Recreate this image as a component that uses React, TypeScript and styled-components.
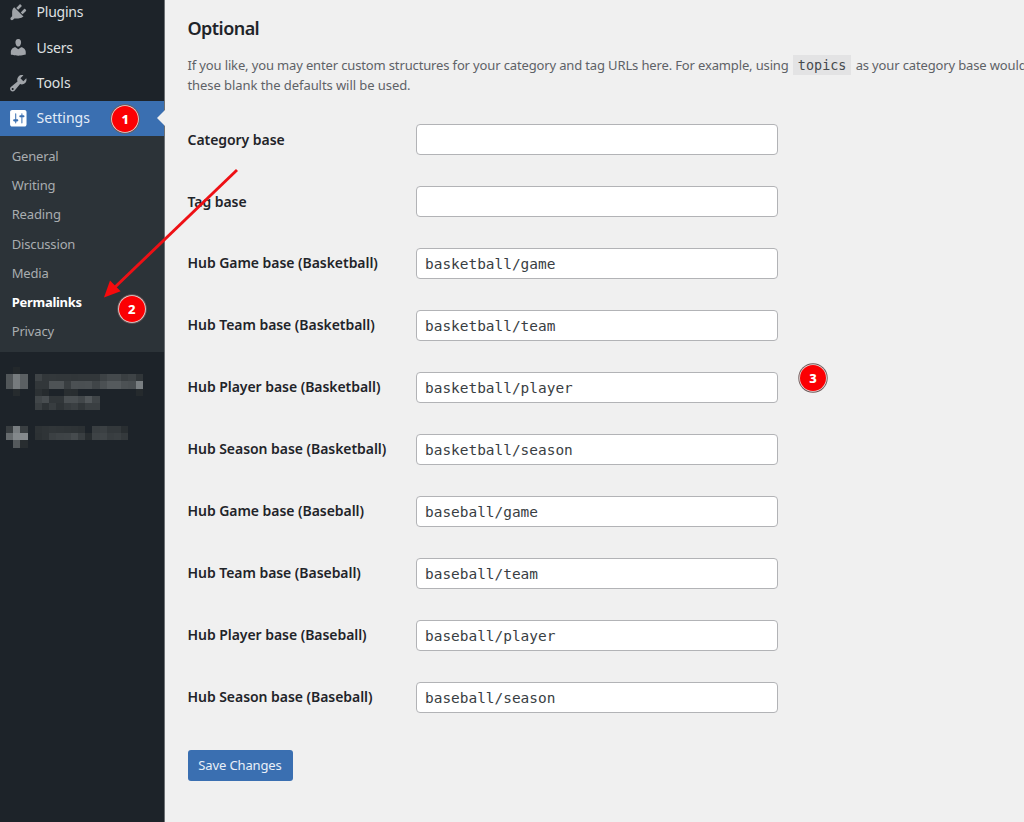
import React from "react";
import styled, { createGlobalStyle } from "styled-components";

const GlobalStyle = createGlobalStyle`
  *, *::before, *::after { box-sizing: border-box; }
  body {
    margin: 0;
    background: #f0f0f0;
    font-family: "Noto Sans", "Open Sans", sans-serif;
    overflow: hidden;
  }
`;

const Screen = styled.div`
  position: relative;
  display: flex;
  width: 1024px;
  height: 822px;
  overflow: hidden;
  background: #f0f0f0;
`;

const Sidebar = styled.nav`
  flex: 0 0 165px;
  display: flex;
  flex-direction: column;
  background: #1d2329;
  border-right: 1px solid #6c7074;
`;

const MenuList = styled.div`
  margin-top: -5.3px;
`;

const MenuItem = styled.a<{ $active?: boolean; $tight?: boolean }>`
  position: relative;
  display: flex;
  align-items: center;
  gap: 8px;
  height: 35.3px;
  padding-left: 8px;
  font-size: 14px;
  line-height: 20px;
  letter-spacing: ${(p) => (p.$tight ? "-0.25px" : "0")};
  color: ${(p) => (p.$active ? "#e3ecf7" : "#dfe0e2")};
  background: ${(p) => (p.$active ? "#3a6fb1" : "transparent")};
`;

const MenuIcon = styled.svg<{ $active?: boolean }>`
  flex: none;
  width: 20.6px;
  height: 20.6px;
  fill: ${(p) => (p.$active ? "#ffffff" : "#a0a4a9")};
`;

const Pointer = styled.span`
  position: absolute;
  right: -1px;
  top: 9.5px;
  border: 8.5px solid transparent;
  border-left-width: 0;
  border-right-color: #f0f0f0;
`;

const SubMenu = styled.div`
  padding: 6.4px 0 6px 11.7px;
  background: #2c3338;
`;

const SubItem = styled.a<{ $current?: boolean }>`
  display: block;
  height: 29.1px;
  font-size: 13px;
  line-height: 29px;
  font-weight: ${(p) => (p.$current ? 700 : 400)};
  letter-spacing: ${(p) => (p.$current ? "-0.28px" : "-0.15px")};
  color: ${(p) => (p.$current ? "#ffffff" : "#a9adb0")};
`;

const Mosaic = styled.svg`
  display: block;
  margin: 15px 0 0 6px;
`;

const Main = styled.main`
  flex: 1 0 859px;
  min-width: 0;
  padding: 15px 0 0 22.5px;
  color: #1f2429;
`;

const Title = styled.h2`
  margin: 0;
  font-size: 18px;
  line-height: 26px;
  font-weight: 600;
  letter-spacing: -0.55px;
`;

const Intro = styled.p`
  margin: 14px 0 14px;
  font-size: 13px;
  line-height: 20px;
  letter-spacing: -0.142px;
  white-space: nowrap;
  color: #5e6267;
`;

const IntroEnd = styled.span`
  letter-spacing: -0.07px;
`;

const Code = styled.code`
  margin: 0 1px;
  padding: 3px 5px 2px;
  background: #e3e3e4;
  color: #45494d;
  font: 13.45px "DejaVu Sans Mono", monospace;
  letter-spacing: 0;
`;

const Field = styled.label`
  display: flex;
  align-items: center;
  height: 62px;
`;

const FieldName = styled.span<{ $raised?: boolean }>`
  flex: 0 0 228.5px;
  padding-bottom: ${(p) => (p.$raised ? "2px" : "0")};
  font-size: 14px;
  line-height: 20px;
  font-weight: 600;
  letter-spacing: -0.05px;
`;

const Input = styled.input`
  width: 362px;
  height: 31px;
  margin: 0 0 1px;
  padding: 1px 8px 0;
  border: 1px solid #b2b3b6;
  border-radius: 4px;
  background: #ffffff;
  color: #393e43;
  font: 14.45px "DejaVu Sans Mono", monospace;
  outline: none;
`;

const SaveButton = styled.button`
  width: 105px;
  height: 31px;
  margin-top: 21px;
  padding: 0 0 1px;
  border: 0;
  border-radius: 3px;
  background: #3a6fb1;
  color: #e9f0f8;
  font: 13px "Noto Sans", sans-serif;
  letter-spacing: -0.13px;
`;

const Badge = styled.span<{ $x: number; $y: number }>`
  position: absolute;
  left: ${(p) => p.$x}px;
  top: ${(p) => p.$y}px;
  display: flex;
  align-items: center;
  justify-content: center;
  width: 26px;
  height: 26px;
  border-radius: 50%;
  background: #fb0003;
  box-shadow: 0 0 0 0.8px #efdada, 0 0 0 1.7px #6e5a5a;
  color: #ffffff;
  font-size: 13px;
  line-height: 26px;
  font-weight: 800;
`;

const ArrowLayer = styled.svg`
  position: absolute;
  left: 95px;
  top: 160px;
  pointer-events: none;
`;

const icons = {
  plugins:
    "M13.11 4.36L9.87 7.6 8 5.73l3.24-3.24c.35-.34 1.05-.2 1.56.32.52.51.66 1.21.31 1.55zm-8 1.77l.91-1.12 9.01 9.01-1.19.84c-.71.71-2.63 1.16-3.82 1.16H6.14L4.9 17.26c-.59.59-1.54.59-2.12 0-.59-.58-.59-1.53 0-2.12l1.24-1.24v-3.88c0-1.13.4-3.19 1.09-3.89zm7.26 3.97l3.24-3.24c.34-.35 1.04-.21 1.55.31.52.51.66 1.21.31 1.55l-3.24 3.25z",
  users:
    "M10 9.25c-2.27 0-2.73-3.44-2.73-3.44C7 4.02 7.82 2 9.97 2c2.16 0 2.98 2.02 2.71 3.81 0 0-.41 3.44-2.68 3.44zm0 2.57L12.72 10c2.39 0 4.52 2.33 4.52 4.53v2.49s-3.65 1.13-7.24 1.13c-3.65 0-7.24-1.13-7.24-1.13v-2.49c0-2.25 1.94-4.48 4.47-4.48z",
  tools:
    "M16.68 9.77c-1.34 1.34-3.3 1.67-4.95.99l-5.41 6.52c-.99.99-2.59.99-3.58 0s-.99-2.59 0-3.57l6.52-5.42c-.68-1.65-.35-3.61.99-4.95 1.28-1.28 3.12-1.62 4.72-1.06l-2.89 2.89 2.82 2.82 2.86-2.87c.53 1.58.18 3.39-1.08 4.65zM3.81 16.21c.4.39 1.04.39 1.43 0 .4-.4.4-1.04 0-1.43-.39-.4-1.03-.4-1.43 0-.39.39-.39 1.03 0 1.43z",
  settings:
    "M18 16V4c0-1.1-.9-2-2-2H4c-1.1 0-2 .9-2 2v12c0 1.1.9 2 2 2h12c1.1 0 2-.9 2-2zM8 11h1c.55 0 1 .45 1 1s-.45 1-1 1H8v1.5c0 .28-.22.5-.5.5s-.5-.22-.5-.5V13H6c-.55 0-1-.45-1-1s.45-1 1-1h1V5.5c0-.28.22-.5.5-.5s.5.22.5.5V11zm5-2h-1c-.55 0-1-.45-1-1s.45-1 1-1h1V5.5c0-.28.22-.5.5-.5s.5.22.5.5V7h1c.55 0 1 .45 1 1s-.45 1-1 1h-1v5.5c0 .28-.22.5-.5.5s-.5-.22-.5-.5V9z",
};

const menu = [
  { name: "Plugins", icon: icons.plugins, tight: true },
  { name: "Users", icon: icons.users, tight: true },
  { name: "Tools", icon: icons.tools },
  { name: "Settings", icon: icons.settings, active: true },
];

const subMenu = ["General", "Writing", "Reading", "Discussion", "Media", "Permalinks", "Privacy"];

const fields: [string, string][] = [
  ["Category base", ""],
  ["Tag base", ""],
  ["Hub Game base (Basketball)", "basketball/game"],
  ["Hub Team base (Basketball)", "basketball/team"],
  ["Hub Player base (Basketball)", "basketball/player"],
  ["Hub Season base (Basketball)", "basketball/season"],
  ["Hub Game base (Baseball)", "baseball/game"],
  ["Hub Team base (Baseball)", "baseball/team"],
  ["Hub Player base (Baseball)", "baseball/player"],
  ["Hub Season base (Baseball)", "baseball/season"],
];

// Pixelated menu entries: one hex brightness per cell, ".." is an empty cell.
const cell = 7.2;
const mosaicRows: [number, string][] = [
  [0, ".. 25"],
  [1, "53 78 5d .. 40 34 35 34 34 33 34 34 34 3f 46 46 3c 40 33"],
  [2, "53 78 5d .. 34 34 50 50 3b 4d 4c 4d 42 4d 57 57 4e 4c 7b"],
  [3, ".. 28 .. .. 2e 28 .. .. 2b 2a .. .. .. .. .. .. .. .. 27"],
  [4, ".. .. .. .. 43 4a 33 33 4c 4c 44 54 42"],
  [5, ".. .. .. .. 3c 30 3a 30 38 3c 33 3c 3c"],
  [8.2, "3a 7a 3c .. 2f 31 33 32 31 30 2e .. 3b 3d 35 35 2b"],
  [9.2, "68 85 87 .. 2e 31 3d 40 41 48 3b 2a 40 42 3a 3c 36"],
  [10.2, ".. 56 2a"],
];

const HiddenEntries = () => (
  <Mosaic width="137" height="82" shapeRendering="crispEdges">
    {mosaicRows.map(([row, cells]) =>
      cells.split(" ").map((v, col) => {
        if (v === "..") return null;
        const n = parseInt(v, 16);
        return (
          <rect
            key={`${row}-${col}`}
            x={col * cell}
            y={row * cell}
            width={cell}
            height={cell}
            fill={`rgb(${n - 2}, ${n + 3}, ${n + 6})`}
          />
        );
      })
    )}
  </Mosaic>
);

export default function App() {
  return (
    <Screen>
      <GlobalStyle />
      <Sidebar>
        <MenuList>
          {menu.map((m) => (
            <MenuItem key={m.name} $active={m.active} $tight={m.tight}>
              <MenuIcon viewBox="0 0 20 20" $active={m.active}>
                <path d={m.icon} />
              </MenuIcon>
              {m.name}
              {m.active && <Pointer />}
            </MenuItem>
          ))}
        </MenuList>
        <SubMenu>
          {subMenu.map((s) => (
            <SubItem key={s} $current={s === "Permalinks"}>
              {s}
            </SubItem>
          ))}
        </SubMenu>
        <HiddenEntries />
      </Sidebar>
      <Main>
        <Title>Optional</Title>
        <Intro>
          If you like, you may enter custom structures for your category and tag URLs here. For example, using{" "}
          <Code>topics</Code> as your category base would
          <br />
          <IntroEnd>these blank the defaults will be used.</IntroEnd>
        </Intro>
        {fields.map(([name, value]) => (
          <Field key={name}>
            <FieldName $raised={value !== ""}>{name}</FieldName>
            <Input type="text" defaultValue={value} spellCheck={false} />
          </Field>
        ))}
        <SaveButton type="button">Save Changes</SaveButton>
      </Main>
      <ArrowLayer width="150" height="145">
        <path d="M142 10L18 129" stroke="#ee1015" strokeWidth="2.9" fill="none" />
        <path d="M9 137.4L15 120.4L25.6 131.2Z" fill="#f80a0c" />
      </ArrowLayer>
      <Badge $x={112.3} $y={106}>1</Badge>
      <Badge $x={118.7} $y={296.3}>2</Badge>
      <Badge $x={800} $y={365.3}>3</Badge>
    </Screen>
  );
}
